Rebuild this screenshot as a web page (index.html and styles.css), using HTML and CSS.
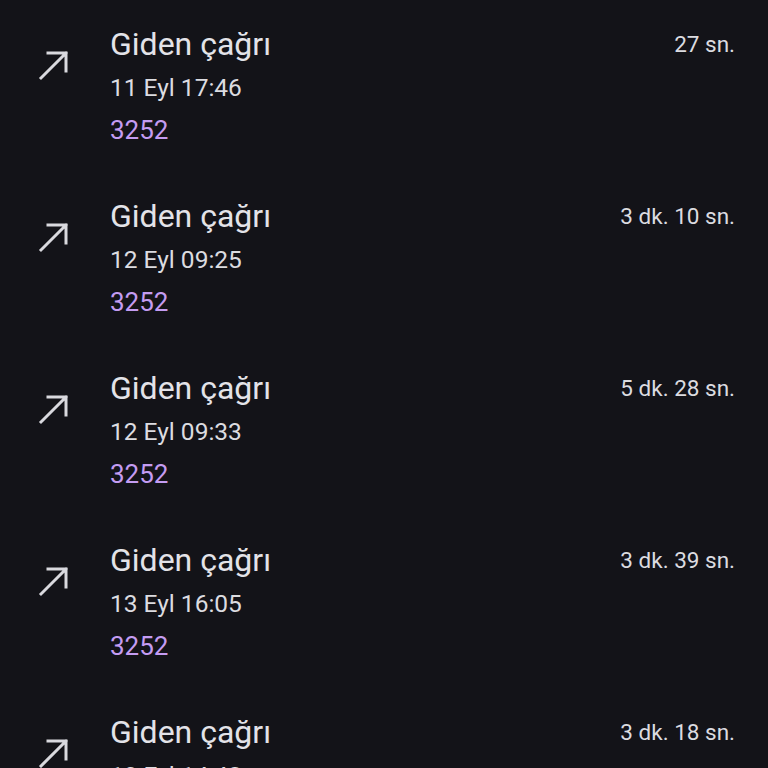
FILE: index.html
```html
<!DOCTYPE html>
<html lang="tr">
<head>
<meta charset="utf-8">
<link rel="stylesheet" href="styles.css">
</head>
<body>
<div class="list">
  <div class="row">
    <div class="icon"><svg viewBox="0 0 32 32" width="32" height="32"><path d="M3 29 L28 4 M10 4 H28 V22" fill="none" stroke="#d9d9de" stroke-width="3" stroke-linecap="square"/></svg></div>
    <div class="texts">
      <div class="title">Giden çağrı</div>
      <div class="date">11 Eyl 17:46</div>
      <div class="num">3252</div>
    </div>
    <div class="dur">27 sn.</div>
  </div>
  <div class="row">
    <div class="icon"><svg viewBox="0 0 32 32" width="32" height="32"><path d="M3 29 L28 4 M10 4 H28 V22" fill="none" stroke="#d9d9de" stroke-width="3" stroke-linecap="square"/></svg></div>
    <div class="texts">
      <div class="title">Giden çağrı</div>
      <div class="date">12 Eyl 09:25</div>
      <div class="num">3252</div>
    </div>
    <div class="dur">3 dk. 10 sn.</div>
  </div>
  <div class="row">
    <div class="icon"><svg viewBox="0 0 32 32" width="32" height="32"><path d="M3 29 L28 4 M10 4 H28 V22" fill="none" stroke="#d9d9de" stroke-width="3" stroke-linecap="square"/></svg></div>
    <div class="texts">
      <div class="title">Giden çağrı</div>
      <div class="date">12 Eyl 09:33</div>
      <div class="num">3252</div>
    </div>
    <div class="dur">5 dk. 28 sn.</div>
  </div>
  <div class="row">
    <div class="icon"><svg viewBox="0 0 32 32" width="32" height="32"><path d="M3 29 L28 4 M10 4 H28 V22" fill="none" stroke="#d9d9de" stroke-width="3" stroke-linecap="square"/></svg></div>
    <div class="texts">
      <div class="title">Giden çağrı</div>
      <div class="date">13 Eyl 16:05</div>
      <div class="num">3252</div>
    </div>
    <div class="dur">3 dk. 39 sn.</div>
  </div>
  <div class="row">
    <div class="icon"><svg viewBox="0 0 32 32" width="32" height="32"><path d="M3 29 L28 4 M10 4 H28 V22" fill="none" stroke="#d9d9de" stroke-width="3" stroke-linecap="square"/></svg></div>
    <div class="texts">
      <div class="title">Giden çağrı</div>
      <div class="date">13 Eyl 14:48</div>
      <div class="num">3252</div>
    </div>
    <div class="dur">3 dk. 18 sn.</div>
  </div>
</div>
</body>
</html>
```
FILE: styles.css
```css
html, body {
  margin: 0;
  padding: 0;
  background: #131318;
  height: 768px;
  overflow: hidden;
}
body {
  font-family: Roboto, "Noto Sans", sans-serif;
  color: #e3e3e8;
}
.list {
  display: flex;
  flex-direction: column;
}
.row {
  display: flex;
  align-items: flex-start;
  height: 172px;
  box-sizing: border-box;
  padding: 22px 33px 0 38px;
}
.icon {
  width: 72px;
  padding-top: 27px;
  line-height: 0;
}
.texts {
  flex: 1;
  display: flex;
  flex-direction: column;
}
.title {
  font-size: 32px;
  line-height: 45px;
}
.date {
  font-size: 24.5px;
  line-height: 42px;
  color: #dcdce0;
}
.num {
  font-size: 26px;
  line-height: 42px;
  color: #c49cf2;
}
.dur {
  font-size: 22.5px;
  line-height: 45px;
  color: #dcdce0;
}
```
